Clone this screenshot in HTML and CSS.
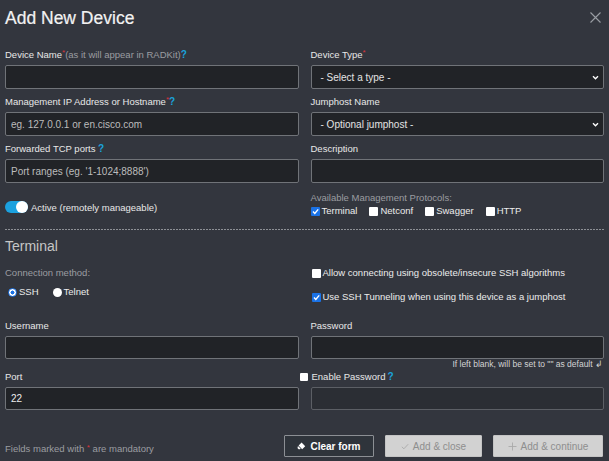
FILE: index.html
```html
<!DOCTYPE html>
<html>
<head>
<meta charset="utf-8">
<link rel="stylesheet" href="styles.css">
</head>
<body>
<div class="modal">
  <header class="header">
    <h1 class="title">Add New Device</h1>
    <span class="close"><svg width="11" height="11" viewBox="0 0 11 11"><path d="M0.5 0.5L10.5 10.5M10.5 0.5L0.5 10.5" stroke="#9a9ea4" stroke-width="1.1" fill="none"/></svg></span>
  </header>
  <div class="form">
    <div class="grid top">
      <div class="field">
        <div class="label">Device Name<span class="req">*</span><span class="muted">(as it will appear in RADKit)</span><span class="help">?</span></div>
        <div class="input"></div>
      </div>
      <div class="field">
        <div class="label">Device Type<span class="req">*</span></div>
        <div class="input select"><span class="value">- Select a type -</span><svg width="7" height="5" viewBox="0 0 7 5"><path d="M1 1.2L3.5 3.7L6 1.2" stroke="#fff" stroke-width="1.4" fill="none"/></svg></div>
      </div>
      <div class="field">
        <div class="label">Management IP Address or Hostname<span class="req">*</span><span class="help">?</span></div>
        <div class="input"><span class="ph">eg. 127.0.0.1 or en.cisco.com</span></div>
      </div>
      <div class="field">
        <div class="label">Jumphost Name</div>
        <div class="input select"><span class="value">- Optional jumphost -</span><svg width="7" height="5" viewBox="0 0 7 5"><path d="M1 1.2L3.5 3.7L6 1.2" stroke="#fff" stroke-width="1.4" fill="none"/></svg></div>
      </div>
      <div class="field">
        <div class="label">Forwarded TCP ports <span class="help">?</span></div>
        <div class="input"><span class="ph">Port ranges (eg. '1-1024;8888')</span></div>
      </div>
      <div class="field">
        <div class="label">Description</div>
        <div class="input"></div>
      </div>
      <div class="toggle-row">
        <span class="toggle"><span class="knob"></span></span>
        <span>Active (remotely manageable)</span>
      </div>
      <div class="protocols">
        <div class="muted-label">Available Management Protocols:</div>
        <div class="proto-list">
          <span class="opt"><span class="cb on"><svg width="9" height="9" viewBox="0 0 9 9"><path d="M2 4.6L3.8 6.4L7.2 2.4" stroke="#fff" stroke-width="1.4" fill="none"/></svg></span>Terminal</span>
          <span class="opt"><span class="cb"></span>Netconf</span>
          <span class="opt"><span class="cb"></span>Swagger</span>
          <span class="opt"><span class="cb"></span>HTTP</span>
        </div>
      </div>
    </div>

    <div class="divider"></div>
    <h2 class="section-title">Terminal</h2>

    <div class="grid terminal">
      <div class="conn">
        <div class="muted-label">Connection method:</div>
        <div class="radios">
          <span class="opt"><span class="radio on"></span>SSH</span>
          <span class="opt"><span class="radio"></span>Telnet</span>
        </div>
      </div>
      <div class="ssh-opts">
        <span class="opt"><span class="cb"></span>Allow connecting using obsolete/insecure SSH algorithms</span>
        <span class="opt"><span class="cb on"><svg width="9" height="9" viewBox="0 0 9 9"><path d="M2 4.6L3.8 6.4L7.2 2.4" stroke="#fff" stroke-width="1.4" fill="none"/></svg></span>Use SSH Tunneling when using this device as a jumphost</span>
      </div>
    </div>

    <div class="grid creds">
      <div class="field">
        <div class="label">Username</div>
        <div class="input short"></div>
      </div>
      <div class="field">
        <div class="label">Password</div>
        <div class="input short"></div>
        <div class="hint">If left blank, will be set to "" as default &#8626;</div>
      </div>
      <div class="field">
        <div class="label">Port</div>
        <div class="input short"><span class="val">22</span></div>
      </div>
      <div class="field">
        <div class="label enable"><span class="cb outside"></span>Enable Password <span class="help">?</span></div>
        <div class="input short disabled"></div>
      </div>
    </div>
  </div>

  <footer class="footer">
    <div class="note">Fields marked with <span class="req">*</span> are mandatory</div>
    <div class="buttons">
      <span class="btn btn-clear"><svg width="9" height="8" viewBox="0 0 9 8"><path d="M4.6 0.6L8.2 4.2L5.2 7.2L1.6 3.6Z" fill="#fff"/><path d="M1.2 4.2L3.6 6.6L2.9 7.3H1.6L0.6 6.3V4.8Z" fill="#fff"/></svg>Clear form</span>
      <span class="btn btn-light btn-close"><svg width="8" height="7" viewBox="0 0 8 7"><path d="M0.8 3.8L2.9 5.8L7.2 1.2" stroke="#a9a9a9" stroke-width="0.9" fill="none"/></svg>Add &amp; close</span>
      <span class="btn btn-light btn-cont"><svg width="9" height="9" viewBox="0 0 9 9"><path d="M4.5 0.5V8.5M0.5 4.5H8.5" stroke="#a9a9a9" stroke-width="0.9" fill="none"/></svg>Add &amp; continue</span>
    </div>
  </footer>
</div>
</body>
</html>
```

FILE: styles.css
```css
* { box-sizing: border-box; }

html, body {
  margin: 0;
  padding: 0;
}

body {
  background: #33363e;
  font-family: "Liberation Sans", Arial, sans-serif;
  font-size: 9.5px;
  color: #e6e6e6;
}

.modal {
  width: 609px;
  height: 461px;
  display: flex;
  flex-direction: column;
}

.header {
  height: 36px;
  display: flex;
  align-items: center;
  justify-content: space-between;
  padding: 0 8px 0 5px;
}

.title {
  margin: 0;
  font-size: 17.5px;
  line-height: 20px;
  font-weight: normal;
  color: #f2f2f2;
  -webkit-text-stroke: 0.2px #f2f2f2;
}

.close {
  display: flex;
  margin-top: -2px;
}

.form {
  padding: 12px 5px 0 5px;
}

.grid {
  display: grid;
  grid-template-columns: 1fr 1fr;
  column-gap: 12px;
}

.top {
  row-gap: 6px;
}

.label {
  line-height: 14px;
  height: 14px;
  margin-bottom: 3px;
  white-space: nowrap;
  color: #e8e8e8;
}

.req {
  color: #d8343a;
  font-size: 8px;
  vertical-align: top;
  line-height: 10px;
}

.muted {
  color: #9b9da1;
}

.help {
  color: #1aa3dc;
  font-weight: bold;
  font-size: 10px;
}

.input {
  height: 24px;
  background: #212327;
  border: 1px solid #707378;
  border-radius: 2px;
  display: flex;
  align-items: center;
  padding: 0 5px;
  font-size: 10px;
}

.input.short {
  height: 23px;
}

.input.disabled {
  background: #2b2e34;
  border-color: #5c5f65;
}

.ph {
  color: #bcbcbc;
}

.val {
  color: #ededed;
}

.select {
  justify-content: space-between;
  padding: 0 4px 0 9px;
  color: #e4e4e4;
}

.toggle-row {
  margin-top: 12px;
  height: 12px;
  display: flex;
  align-items: center;
  gap: 3px;
  color: #e8e8e8;
}

.toggle {
  width: 23px;
  height: 12px;
  border-radius: 6px;
  background: #1ba1df;
  display: flex;
  justify-content: flex-end;
}

.knob {
  width: 12px;
  height: 12px;
  border-radius: 50%;
  background: #fff;
}

.protocols {
  padding-top: 2px;
}

.muted-label {
  color: #9b9da1;
  line-height: 14px;
}

.proto-list {
  display: flex;
  gap: 12px;
  line-height: 12px;
}

.opt {
  display: inline-flex;
  align-items: center;
  gap: 2px;
  white-space: nowrap;
  color: #ececec;
}

.cb {
  width: 9px;
  height: 9px;
  background: #fff;
  border-radius: 1px;
  display: inline-flex;
  flex: none;
}

.cb.on {
  background: #1a72e6;
}

.radio {
  width: 9px;
  height: 9px;
  border-radius: 50%;
  background: #fff;
  display: inline-block;
  flex: none;
}

.radio.on {
  border: 1.5px solid #1a72e6;
  background: radial-gradient(circle, #1a72e6 0 1.8px, #fff 2.2px);
}

.divider {
  margin: 12px 0 0 0;
  height: 1px;
  background: repeating-linear-gradient(to right, #8d9095 0 2px, transparent 2px 3px);
}

.section-title {
  margin: 7px 0 0 0;
  font-size: 14px;
  line-height: 18px;
  font-weight: normal;
  color: #c6c6c6;
}

.terminal {
  margin-top: 11px;
}

.radios {
  display: flex;
  gap: 14px;
  margin-top: 5px;
  padding-left: 3px;
  line-height: 14px;
}

.ssh-opts {
  display: flex;
  flex-direction: column;
  gap: 10px;
  line-height: 14px;
  padding-left: 1px;
}

.creds {
  margin-top: 15px;
  row-gap: 1px;
}

.hint {
  text-align: right;
  font-size: 8.5px;
  line-height: 10px;
  color: #d4d4d4;
  padding-right: 1px;
}

.enable {
  display: flex;
  align-items: center;
  gap: 4px;
}

.enable .help {
  margin-left: -2px;
}

.cb.outside {
  margin-left: -11px;
  width: 8px;
  height: 8px;
}

.footer {
  margin-top: 25px;
  padding: 0 6px 0 5px;
  display: flex;
  align-items: center;
  justify-content: space-between;
}

.note {
  color: #9b9da1;
  padding-top: 4px;
}

.buttons {
  display: flex;
  gap: 11px;
}

.btn {
  height: 22px;
  display: inline-flex;
  align-items: center;
  justify-content: center;
  gap: 4px;
  border-radius: 1px;
  font-size: 10px;
}

.btn-clear {
  width: 90px;
  border: 1px solid #8c8f94;
  background: #2f343b;
  color: #fff;
  font-weight: bold;
}

.btn-light {
  background: #d2d2d2;
  border: 1px solid #c4c4c4;
  color: #8e8e8e;
}

.btn-close {
  width: 97px;
}

.btn-cont {
  width: 110px;
}
```
